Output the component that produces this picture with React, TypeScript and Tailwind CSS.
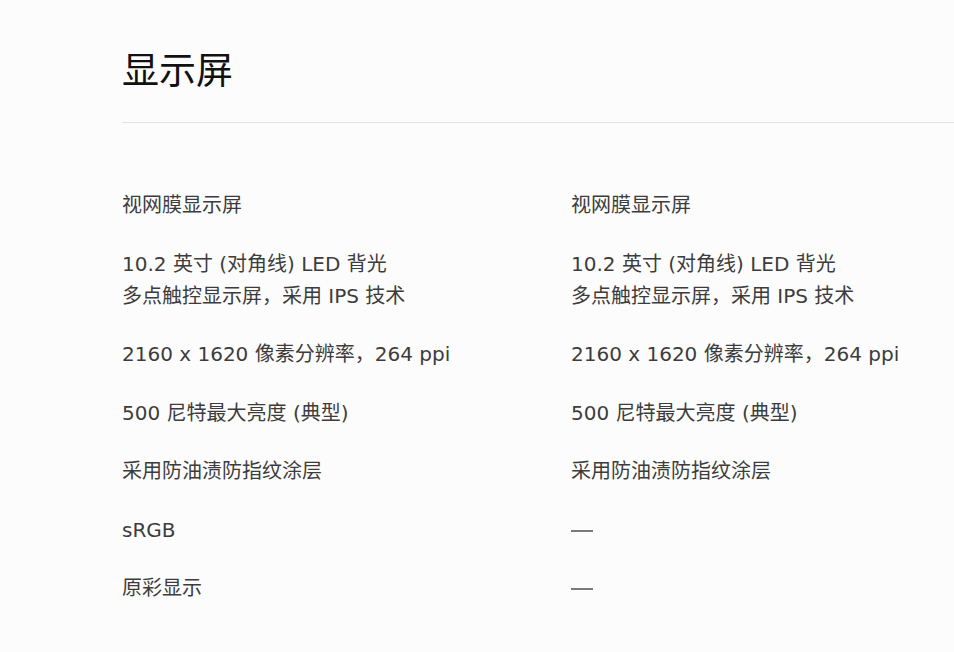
const rows: [string[], string[]][] = [
  [["视网膜显示屏"], ["视网膜显示屏"]],
  [
    ["10.2 英寸 (对角线) LED 背光", "多点触控显示屏，采用 IPS 技术"],
    ["10.2 英寸 (对角线) LED 背光", "多点触控显示屏，采用 IPS 技术"],
  ],
  [["2160 x 1620 像素分辨率，264 ppi"], ["2160 x 1620 像素分辨率，264 ppi"]],
  [["500 尼特最大亮度 (典型)"], ["500 尼特最大亮度 (典型)"]],
  [["采用防油渍防指纹涂层"], ["采用防油渍防指纹涂层"]],
  [["sRGB"], ["—"]],
  [["原彩显示"], ["—"]],
];

function Cell({ lines, first }: { lines: string[]; first?: boolean }) {
  return (
    <div className={first ? "w-[449px] shrink-0" : "flex-1"}>
      {lines.map((l) => (
        <div key={l} className="flex h-[32px] items-center whitespace-nowrap">
          {l === "—" ? <span className="mt-[2px] h-[2px] w-[22px] bg-[#7a7a7a]" /> : l}
        </div>
      ))}
    </div>
  );
}

export default function App() {
  return (
    <div
      className="min-h-[652px] w-[954px] bg-[#fcfcfc] pl-[122px] pt-[46px]"
      style={{ fontFamily: '"DejaVu Sans", "Noto Sans CJK SC", sans-serif' }}
    >
      <h1 className="text-[37px] leading-[44px] text-[#111]" style={{ fontFamily: '"Noto Sans CJK SC", sans-serif' }}>
        显示屏
      </h1>
      <div className="mt-[32px] h-px bg-[#e2e2e2]" />
      <div className="mt-[66px] flex flex-col gap-[26.5px] text-[20px] leading-[32px] text-[#3c3c3c]">
        {rows.map(([a, b], i) => (
          <div key={i} className="flex">
            <Cell lines={a} first />
            <Cell lines={b} />
          </div>
        ))}
      </div>
    </div>
  );
}
